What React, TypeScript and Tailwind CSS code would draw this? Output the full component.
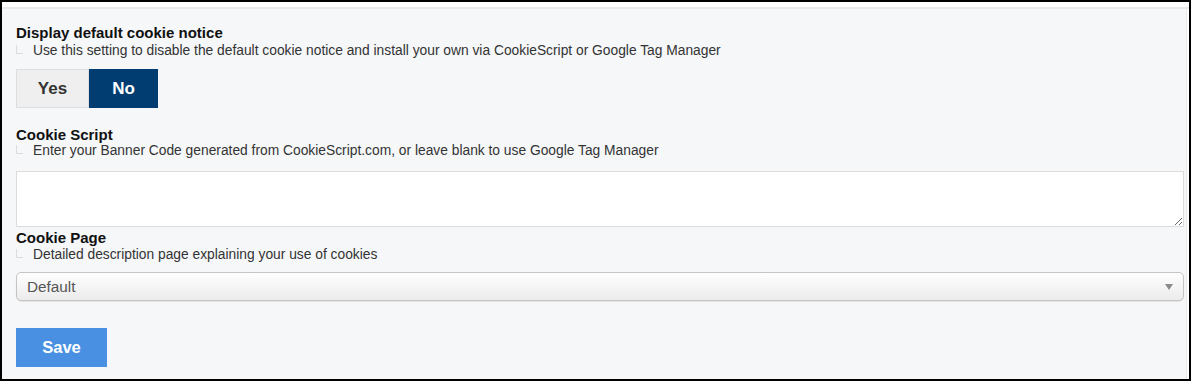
import React from "react";

function Hint({ children }: { children: React.ReactNode }) {
  return (
    <div className="flex h-4 items-start text-[13.8px] leading-4 text-[#333]">
      <span className="mt-[2px] h-[9px] w-[7px] shrink-0 border-b border-l border-[#dcdcdc]" />
      <span className="ml-[10px] whitespace-nowrap">{children}</span>
    </div>
  );
}

function Title({ children }: { children: React.ReactNode }) {
  return (
    <div className="h-4 whitespace-nowrap text-[15px] font-bold leading-4 text-[#111]">
      {children}
    </div>
  );
}

export default function App() {
  return (
    <div className="h-[381px] w-[1193px] bg-white font-['Liberation_Sans',Arial,sans-serif]">
      <div className="flex h-[381px] w-[1191px] flex-col border-2 border-black bg-white">
        <div className="h-[5px] shrink-0 bg-white" />
        <div className="flex flex-1 border-t-2 border-[#e9eaec]">
          <div className="mr-[3px] flex flex-1 flex-col border-r border-[#e8e9eb] bg-[#f6f7f9] pl-[14px] pr-[2px] pt-[16px]">
            <Title>Display default cookie notice</Title>
            <div className="mt-[2px]">
              <Hint>
                Use this setting to disable the default cookie notice and install your own via CookieScript or Google Tag Manager
              </Hint>
            </div>
            <div className="mt-[10px] flex h-[39px]">
              <button className="h-[39px] w-[73px] border border-[#dedede] bg-[#efefef] text-[17px] font-bold text-[#333]">
                Yes
              </button>
              <button className="h-[39px] w-[69px] bg-[#023d72] text-[17px] font-bold text-white">
                No
              </button>
            </div>
            <div className="mt-[19px]">
              <Title>Cookie Script</Title>
            </div>
            <Hint>
              Enter your Banner Code generated from CookieScript.com, or leave blank to use Google Tag Manager
            </Hint>
            <textarea
              className="mt-[12px] block h-[56px] w-[1168px] resize border border-[#dcdcdc] bg-white outline-none"
              defaultValue=""
            />
            <div className="mt-[3px]">
              <Title>Cookie Page</Title>
            </div>
            <div className="mt-[1px]">
              <Hint>Detailed description page explaining your use of cookies</Hint>
            </div>
            <div className="relative mt-[9px] flex h-[29px] w-[1168px] items-center rounded-[5px] border border-[#c4c4c4] bg-gradient-to-b from-white to-[#ebebeb] pl-[10px] shadow-[0_1px_1px_rgba(0,0,0,0.08)]">
              <span className="text-[15.3px] leading-5 text-[#555]">Default</span>
              <svg
                className="absolute right-[10px] top-[11px]"
                width="8"
                height="6"
                viewBox="0 0 8 6"
              >
                <polygon points="0,0 8,0 4,6" fill="#8a8a8a" />
              </svg>
            </div>
            <button className="mt-[27px] h-[39px] w-[91px] bg-[#4a90e2] text-[16.5px] font-bold text-white">
              Save
            </button>
          </div>
        </div>
      </div>
    </div>
  );
}
